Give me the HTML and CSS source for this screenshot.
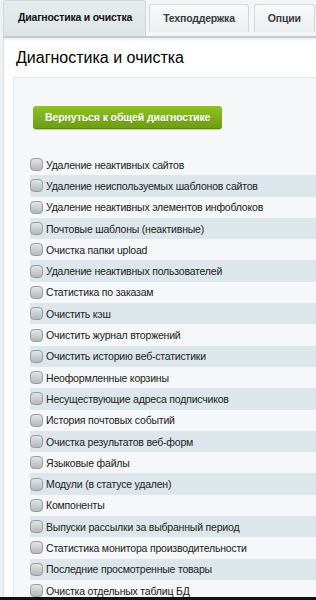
FILE: index.html
```html
<!DOCTYPE html>
<html lang="ru">
<head>
    <meta charset="UTF-8">
    <meta name="viewport" content="width=device-width, initial-scale=1.0">
    <title>Диагностика и очистка</title>
    <link rel="stylesheet" href="styles.css">
</head>
<body>
    <div class="page">
        <nav class="tabs">
            <div class="tab active">Диагностика и очистка</div>
            <div class="tab">Техподдержка</div>
            <div class="tab">Опции</div>
        </nav>

        <div class="content">
            <h1 class="title">Диагностика и очистка</h1>

            <div class="panel">
                <button class="btn-green" type="button">Вернуться к общей диагностике</button>

                <ul class="checklist">
                    <li><label><input type="checkbox"><span>Удаление неактивных сайтов</span></label></li>
                    <li><label><input type="checkbox"><span>Удаление неиспользуемых шаблонов сайтов</span></label></li>
                    <li><label><input type="checkbox"><span>Удаление неактивных элементов инфоблоков</span></label></li>
                    <li><label><input type="checkbox"><span>Почтовые шаблоны (неактивные)</span></label></li>
                    <li><label><input type="checkbox"><span>Очистка папки upload</span></label></li>
                    <li><label><input type="checkbox"><span>Удаление неактивных пользователей</span></label></li>
                    <li><label><input type="checkbox"><span>Статистика по заказам</span></label></li>
                    <li><label><input type="checkbox"><span>Очистить кэш</span></label></li>
                    <li><label><input type="checkbox"><span>Очистить журнал вторжений</span></label></li>
                    <li><label><input type="checkbox"><span>Очистить историю веб-статистики</span></label></li>
                    <li><label><input type="checkbox"><span>Неоформленные корзины</span></label></li>
                    <li><label><input type="checkbox"><span>Несуществующие адреса подписчиков</span></label></li>
                    <li><label><input type="checkbox"><span>История почтовых событий</span></label></li>
                    <li><label><input type="checkbox"><span>Очистка результатов веб-форм</span></label></li>
                    <li><label><input type="checkbox"><span>Языковые файлы</span></label></li>
                    <li><label><input type="checkbox"><span>Модули (в статусе удален)</span></label></li>
                    <li><label><input type="checkbox"><span>Компоненты</span></label></li>
                    <li><label><input type="checkbox"><span>Выпуски рассылки за выбранный период</span></label></li>
                    <li><label><input type="checkbox"><span>Статистика монитора производительности</span></label></li>
                    <li><label><input type="checkbox"><span>Последние просмотренные товары</span></label></li>
                    <li><label><input type="checkbox"><span>Очистка отдельных таблиц БД</span></label></li>
                </ul>
            </div>
        </div>
    </div>
    <div class="bottom-edge"></div>
</body>
</html>
```

FILE: styles.css
```css
body {
    font-family: "Liberation Sans", Arial, sans-serif;
    background-color: #eef2f3;
    color: #222;
    margin: 0;
    padding: 0;
    overflow: hidden;
}
.page {
    padding-left: 3px;
}
.tabs {
    display: flex;
    align-items: flex-end;
    height: 36px;
    background-color: #f3f5f6;
}
.tab {
    font-size: 10.5px;
    font-weight: bold;
    letter-spacing: -0.2px;
    white-space: nowrap;
    color: #3a3a3a;
    background: linear-gradient(#f8f9f9, #eceff0);
    border: 1px solid #d3d9db;
    border-bottom: none;
    border-radius: 3px 3px 0 0;
    height: 27px;
    line-height: 27px;
    padding: 0 13px;
    margin-right: 5px;
    margin-bottom: 4px;
}
.tab.active {
    color: #111;
    background: linear-gradient(#e6ebed, #dfe5e7);
    border-color: #d0d7da;
    height: 35px;
    line-height: 33px;
    padding: 0 13px 0 14px;
    margin-bottom: 0;
    margin-right: 3px;
}
.content {
    background-color: #fff;
    border-top: 2px solid #c3cbce;
    border-left: 1px solid #dde3e5;
    box-shadow: inset 0 2px 2px rgba(0, 0, 0, 0.06);
    padding: 0 0 0 9px;
    min-height: 600px;
}
.title {
    font-size: 16px;
    font-weight: normal;
    color: #000;
    margin: 0;
    padding: 10px 0 0 3px;
    height: 29px;
    line-height: 20px;
}
.panel {
    background-color: #f5f7f8;
    border-top: 1px solid #e4e8ea;
    border-left: 1px solid #e4e8ea;
    padding: 28px 0 0 16px;
}
.btn-green {
    display: block;
    font-family: "Liberation Sans", Arial, sans-serif;
    font-size: 10.5px;
    font-weight: bold;
    letter-spacing: -0.1px;
    color: #fff;
    background: linear-gradient(#90c22a, #6e9d12);
    border: none;
    border-bottom: 1px solid #5d8609;
    border-radius: 3px;
    box-shadow: 0 1px 1px rgba(0, 0, 0, 0.2);
    height: 23px;
    padding: 0 12px;
    margin: 0 0 25px 3px;
    cursor: pointer;
    text-shadow: 0 1px 0 rgba(0, 0, 0, 0.15);
}
.checklist {
    list-style: none;
    margin: 0;
    padding: 0;
}
.checklist li {
    height: 21.3px;
    display: flex;
    align-items: center;
}
.checklist li:nth-child(even) {
    background-color: #dde6ea;
}
.checklist label {
    display: flex;
    align-items: center;
    font-size: 10.5px;
    letter-spacing: -0.2px;
    white-space: nowrap;
    color: #222;
    cursor: pointer;
}
.checklist input {
    appearance: none;
    width: 13px;
    height: 13px;
    margin: 0 3px 0 0;
    border: 1px solid #959ea1;
    border-radius: 4px;
    background: linear-gradient(#e2e5e6, #b3b9bb);
    box-sizing: border-box;
}
.bottom-edge {
    position: fixed;
    left: 0;
    bottom: 0;
    width: 100%;
    height: 3px;
    background-color: #111;
}
```
